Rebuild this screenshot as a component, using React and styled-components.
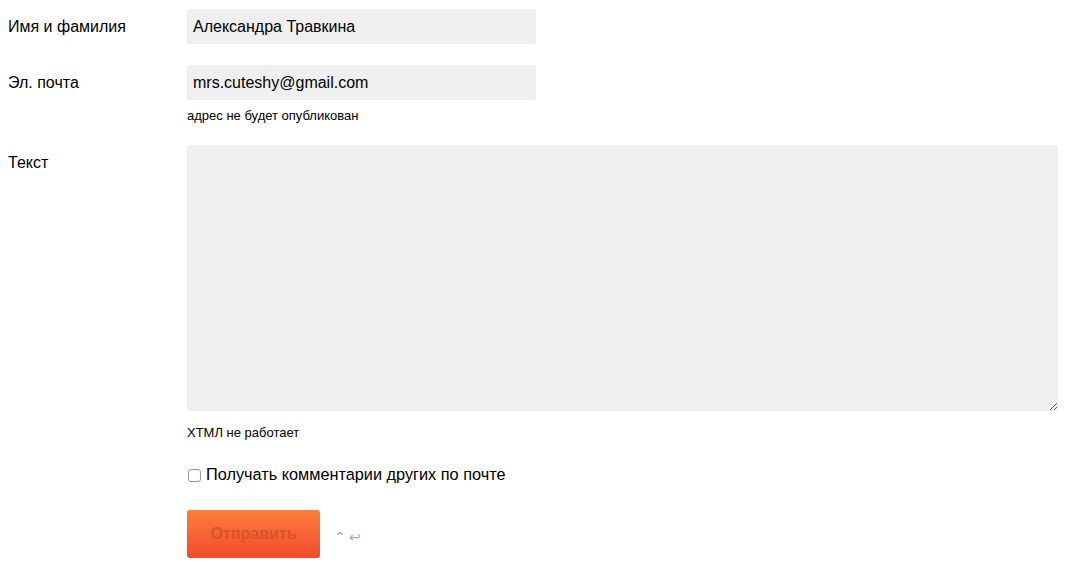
import React from 'react';
import styled, { createGlobalStyle } from 'styled-components';

const GlobalStyle = createGlobalStyle`
  body {
    margin: 0;
    background: #fff;
    font-family: "Liberation Sans", Arial, sans-serif;
    color: #000;
  }
`;

const Form = styled.form`
  display: grid;
  grid-template-columns: 179px 1fr;
  row-gap: 21px;
  padding: 9px 11px 0 8px;
  width: 1050px;
  box-sizing: border-box;
`;

const Label = styled.label`
  font-size: 16px;
  line-height: 20px;
  padding-top: ${p => p.top || 8}px;
`;

const Field = styled.div`
  display: flex;
  flex-direction: column;
  align-items: flex-start;
`;

const Input = styled.input`
  width: 349px;
  height: 35px;
  box-sizing: border-box;
  border: none;
  border-radius: 3px;
  background: #efefef;
  padding: 0 6px;
  font-family: inherit;
  font-size: 16px;
  color: #000;
  outline: none;
`;

const TextArea = styled.textarea`
  width: 871px;
  height: 266px;
  box-sizing: border-box;
  border: none;
  border-radius: 3px;
  background: #efefef;
  padding: 6px;
  font-family: inherit;
  font-size: 16px;
  outline: none;
  resize: vertical;
  display: block;
`;

const Hint = styled.div`
  font-size: 13px;
  line-height: 16px;
  margin-top: ${p => p.gap || 8}px;
`;

const CheckRow = styled.label`
  grid-column: 2;
  display: flex;
  align-items: center;
  gap: 5px;
  font-size: 16.3px;
  margin-top: 3px;
`;

const Check = styled.input`
  appearance: none;
  width: 13px;
  height: 13px;
  margin: 2px 0 0 1px;
  border: 1px solid #9a9a9a;
  border-radius: 3px;
  background: #fff;
`;

const Actions = styled.div`
  grid-column: 2;
  display: flex;
  align-items: center;
  gap: 14px;
  margin-top: 5px;
`;

const Submit = styled.button`
  width: 133px;
  height: 48px;
  border: none;
  border-radius: 3px;
  background: linear-gradient(#fd7e38, #ef4b2f);
  color: #d9522c;
  font-family: inherit;
  font-size: 16px;
  font-weight: bold;
  padding: 0;
`;

const Shortcut = styled.span`
  font-size: 14px;
  color: #aaa;
  letter-spacing: 3px;
  margin-top: 6px;
`;

export default function App() {
  return (
    <>
      <GlobalStyle />
      <Form onSubmit={e => e.preventDefault()}>
        <Label>Имя и фамилия</Label>
        <Field>
          <Input defaultValue="Александра Травкина" />
        </Field>

        <Label>Эл. почта</Label>
        <Field>
          <Input defaultValue="mrs.cuteshy@gmail.com" />
          <Hint>адрес не будет опубликован</Hint>
        </Field>

        <Label top={8}>Текст</Label>
        <Field>
          <TextArea />
          <Hint gap={14}>ХТМЛ не работает</Hint>
        </Field>

        <CheckRow>
          <Check type="checkbox" />
          Получать комментарии других по почте
        </CheckRow>

        <Actions>
          <Submit type="submit">Отправить</Submit>
          <Shortcut>⌃↩</Shortcut>
        </Actions>
      </Form>
    </>
  );
}
